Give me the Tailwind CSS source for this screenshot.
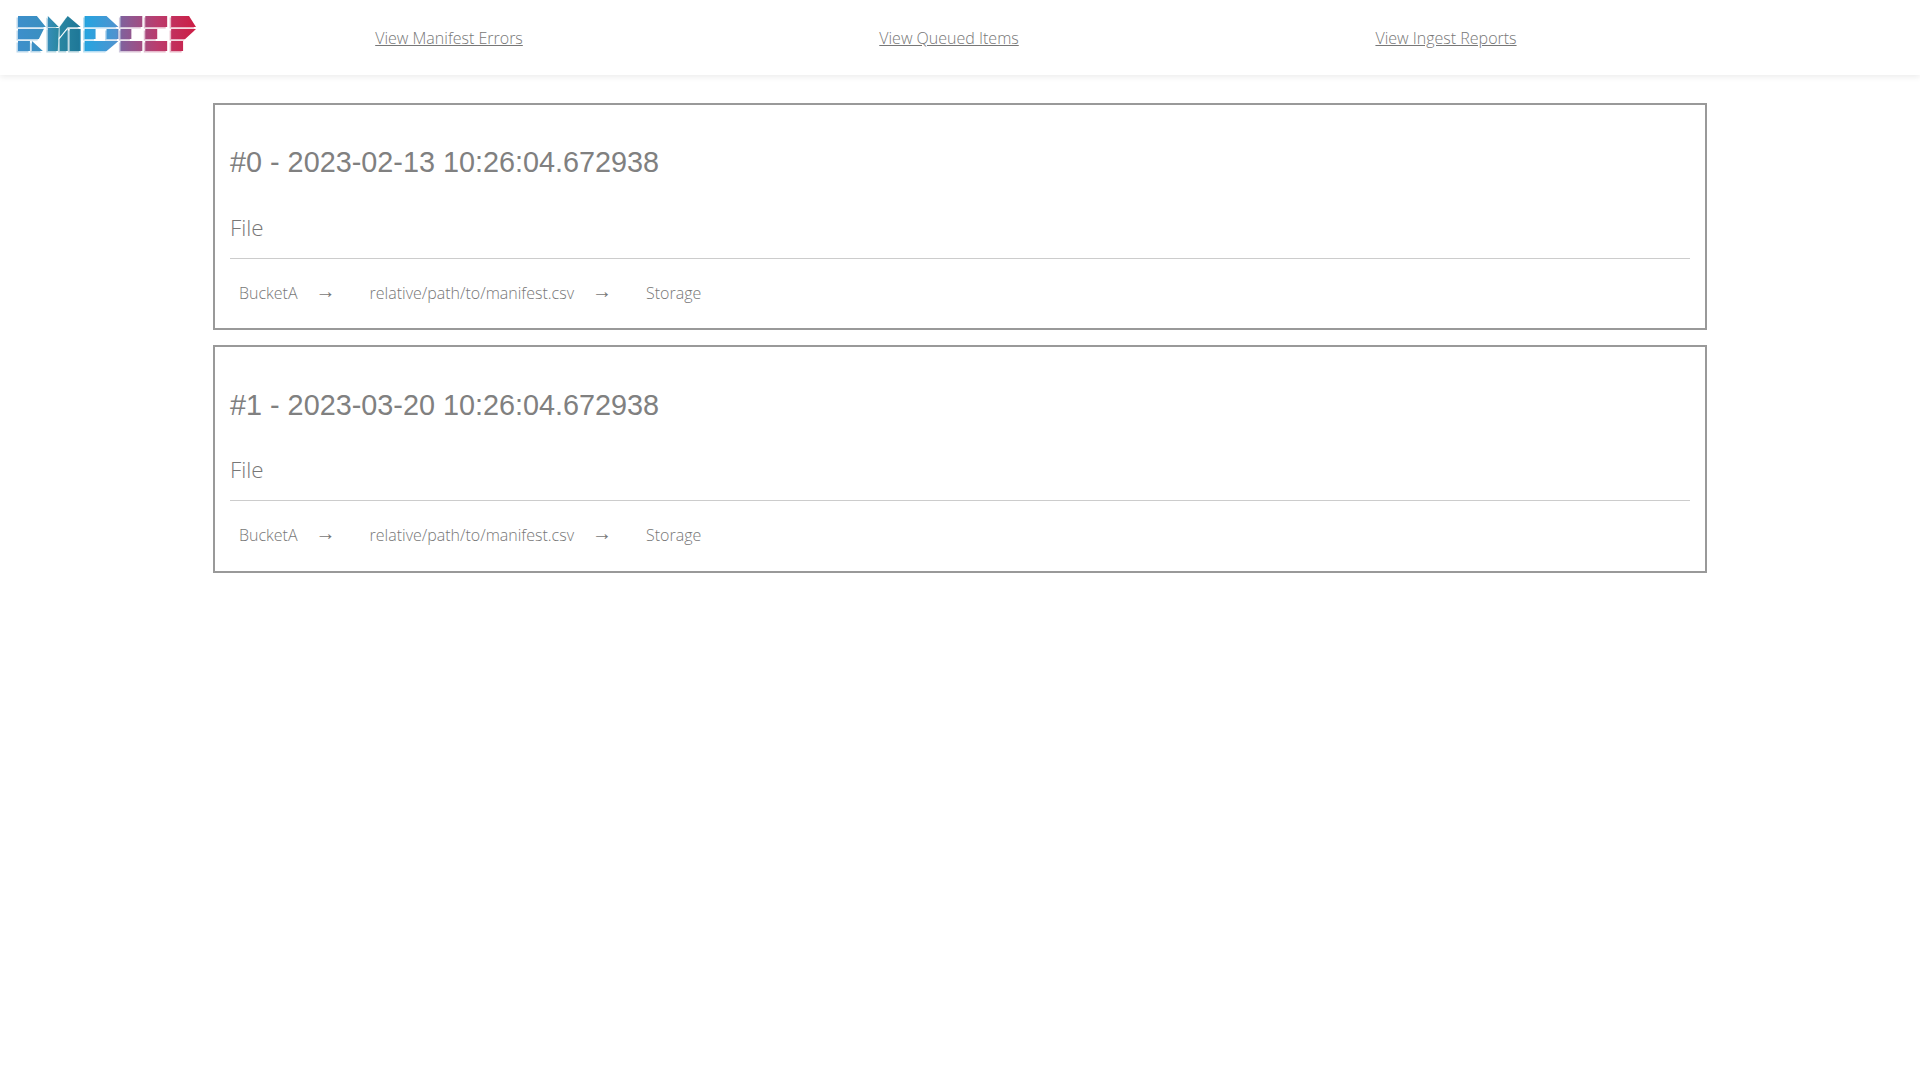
<!DOCTYPE html>
<html lang="en">
<head>
  <meta charset="UTF-8">
  <title>Manifest Errors</title>
  <script src="https://cdn.jsdelivr.net/npm/@tailwindcss/browser@4"></script>
</head>
<body class="bg-white text-[#777] font-['Open_Sans',sans-serif] font-light">

  <header class="relative h-[75px] flex items-center bg-white shadow-[0_2px_6px_rgba(0,0,0,0.08)]">
    <a href="#" class="block ml-[18px] w-[179px] shrink-0 self-start mt-[15px]">
      <svg width="179" height="38" viewBox="0 0 180 38" class="block overflow-visible">
        <defs>
          <linearGradient id="logoFill" x1="0" y1="0" x2="180" y2="0" gradientUnits="userSpaceOnUse">
            <stop offset="0" stop-color="#3d8fcb"/>
            <stop offset="0.15" stop-color="#3a8fc0"/>
            <stop offset="0.22" stop-color="#2b88a3"/>
            <stop offset="0.34" stop-color="#1f7898"/>
            <stop offset="0.38" stop-color="#27a4e0"/>
            <stop offset="0.55" stop-color="#4f93cf"/>
            <stop offset="0.58" stop-color="#82609b"/>
            <stop offset="0.78" stop-color="#bb3c6d"/>
            <stop offset="1" stop-color="#cd1c43"/>
          </linearGradient>
          <g id="logoShapes">
            <path d="M0 1H19L28 12H0ZM0 14H26L21 24H0ZM0 26H12V36H0ZM14 26 25 36H14Z"/>
            <path d="M30 1 41 12H30ZM30 13H41L40 36H30ZM42 12 50 1 63 12H50L42 22ZM42 24 50 14V36H42ZM52 14H63V36H52Z"/>
            <path d="M67 1H89L101 12H67ZM67 14H78V24H67ZM89 14H101V24H89ZM67 26H101L89 36H67Z"/>
            <path d="M103 1H125V12H103ZM103 14H114V24H103ZM103 26H125V36H103Z"/>
            <path d="M128 1H150V12H128ZM128 14H140V24H128ZM128 26H150V36H128Z"/>
            <path d="M154 1H172L179 12H154ZM154 14H179L168 24H154ZM154 26H166V36H154Z"/>
          </g>
        </defs>
        <use href="#logoShapes" fill="url(#logoFill)" opacity="0.35" x="-1.500" y="1.500"/>
        <use href="#logoShapes" fill="url(#logoFill)"/>
      </svg>
    </a>
    <nav class="grid grid-cols-[500px_500px_494px] text-[16px] pl-[2px]">
      <a href="#" class="underline text-center">View Manifest Errors</a>
      <a href="#" class="underline text-center">View Queued Items</a>
      <a href="#" class="underline text-center">View Ingest Reports</a>
    </nav>
  </header>

  <main class="w-[1494px] ml-[213px] mt-[28px] flex flex-col gap-[15px]">
    <section class="border-2 border-[#999] px-[15px] h-[227px]">
      <h2 class="mt-[39px] text-[28.8px] leading-[36px] text-[#808080] font-normal font-['Liberation_Sans',sans-serif]">#0 - 2023-02-13 10:26:04.672938</h2>
      <h4 class="mt-[33px] text-[22.4px] leading-[30px]">File</h4>
      <hr class="mt-[15px] border-[#ccc]">
      <div class="flex items-center mt-[20px] pl-[9px] text-[16px] leading-[24px]">
        <span>BucketA</span>
        <span class="ml-[18px] mb-[4px] text-[20px] font-['Liberation_Sans',sans-serif]">→</span>
        <span class="ml-[34px]">relative/path/to/manifest.csv</span>
        <span class="ml-[18px] mb-[4px] text-[20px] font-['Liberation_Sans',sans-serif]">→</span>
        <span class="ml-[34px]">Storage</span>
      </div>
    </section>
    <section class="border-2 border-[#999] px-[15px] h-[228px]">
      <h2 class="mt-[40px] text-[28.8px] leading-[36px] text-[#808080] font-normal font-['Liberation_Sans',sans-serif]">#1 - 2023-03-20 10:26:04.672938</h2>
      <h4 class="mt-[32px] text-[22.4px] leading-[30px]">File</h4>
      <hr class="mt-[15px] border-[#ccc]">
      <div class="flex items-center mt-[20px] pl-[9px] text-[16px] leading-[24px]">
        <span>BucketA</span>
        <span class="ml-[18px] mb-[4px] text-[20px] font-['Liberation_Sans',sans-serif]">→</span>
        <span class="ml-[34px]">relative/path/to/manifest.csv</span>
        <span class="ml-[18px] mb-[4px] text-[20px] font-['Liberation_Sans',sans-serif]">→</span>
        <span class="ml-[34px]">Storage</span>
      </div>
    </section>
  </main>

</body>
</html>
